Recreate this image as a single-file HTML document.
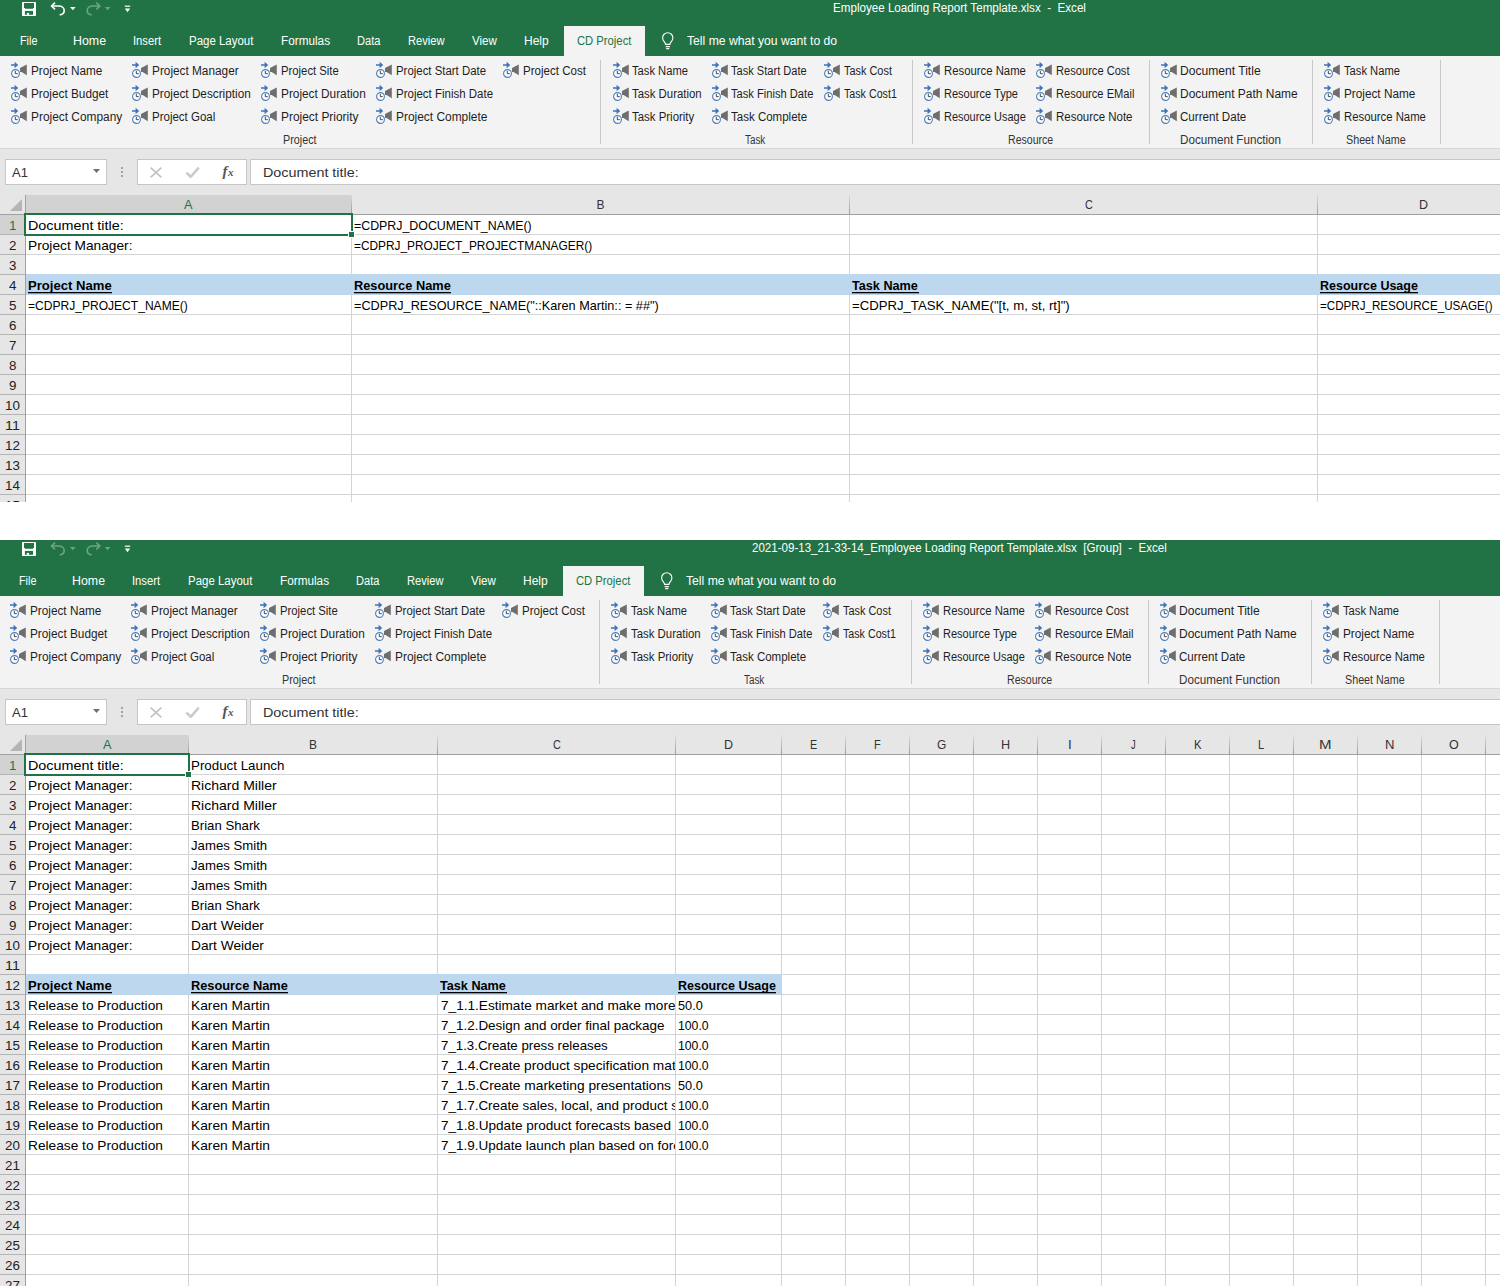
<!DOCTYPE html><html><head><meta charset="utf-8"><style>html,body{margin:0;padding:0}body{width:1500px;height:1286px;overflow:hidden;background:#fff;position:relative;font-family:"Liberation Sans",sans-serif}.a{position:absolute}.t{position:absolute;line-height:0;white-space:pre;transform-origin:0 0}</style></head><body>
<svg width="0" height="0" style="position:absolute"><defs><symbol id="ri" viewBox="0 0 24 20"><path d="M3,6.3 H6.6 V3.8 L10.2,7 L6.6,10.2 V7.7 H3 Z" fill="#3d74ba"/><circle cx="7.5" cy="15.5" r="3.9" fill="#fff" stroke="#4a7ebb" stroke-width="1.1"/><path d="M7.3,12.9 V15.7 H9.8" fill="none" stroke="#444" stroke-width="1"/><path d="M12,10 L18.8,6.6 V17.3 L13.6,13.9 H12 Z" fill="#6e6e6e"/></symbol></defs></svg>
<div class="a" style="left:0;top:0px;width:1500px;height:502px;overflow:hidden;background:#fff">
<div class="a" style="left:0px;top:0px;width:1500px;height:56px;background:#217346;"></div>
<svg class="a" style="left:0;top:0" width="140" height="20" viewBox="0 0 140 20"><rect x="22" y="2" width="14" height="14" rx="0.8" fill="#fff"/><path d="M24,2.9 H34 V7.9 H33 V8.8 H25 V7.9 H24 Z" fill="#217346"/><rect x="24.9" y="10.9" width="8.1" height="3.9" fill="#217346"/><rect x="26.8" y="12.9" width="2.3" height="2" fill="#fff"/><g fill="none" stroke="#fff" stroke-width="1.6"><path d="M55,2.6 L51.6,6 L55,9.4"/><path d="M51.6,6 H58.6 C62,6 64.2,8 64.2,10.5 C64.2,13 62.3,14.6 59.6,14.8"/></g><path d="M70,7 H75.6 L72.8,10.2 Z" fill="#fff"/><g fill="none" stroke="#fff" stroke-width="1.6" opacity="0.35"><path d="M96.4,2.6 L99.8,6 L96.4,9.4"/><path d="M99.8,6 H92.8 C89.4,6 87.2,8 87.2,10.5 C87.2,13 89.1,14.6 91.8,14.8"/></g><path d="M104.8,7 H110.4 L107.6,10.2 Z" fill="#fff" opacity="0.35"/><rect x="124.8" y="5.6" width="5.4" height="1.2" fill="#fff"/><path d="M124.8,8.6 H130.2 L127.5,12.2 Z" fill="#fff"/></svg>
<div class="t" style="left:832.70px;top:8px;font-size:12px;color:#fff;transform:scaleX(0.9682);">Employee Loading Report Template.xlsx  -  Excel</div>
<div class="t" style="left:20.30px;top:41px;font-size:12px;color:#fff;transform:scaleX(0.9000);">File</div>
<div class="t" style="left:73.20px;top:41px;font-size:12px;color:#fff;transform:scaleX(1.0312);">Home</div>
<div class="t" style="left:133.20px;top:41px;font-size:12px;color:#fff;transform:scaleX(0.9355);">Insert</div>
<div class="t" style="left:189.20px;top:41px;font-size:12px;color:#fff;transform:scaleX(0.9559);">Page Layout</div>
<div class="t" style="left:281.20px;top:41px;font-size:12px;color:#fff;transform:scaleX(0.9800);">Formulas</div>
<div class="t" style="left:357.30px;top:41px;font-size:12px;color:#fff;transform:scaleX(0.9231);">Data</div>
<div class="t" style="left:408.30px;top:41px;font-size:12px;color:#fff;transform:scaleX(0.9250);">Review</div>
<div class="t" style="left:472.00px;top:41px;font-size:12px;color:#fff;transform:scaleX(0.9615);">View</div>
<div class="t" style="left:524.00px;top:41px;font-size:12px;color:#fff;transform:scaleX(1.0000);">Help</div>
<div class="t" style="left:687.00px;top:41px;font-size:12px;color:#fff;transform:scaleX(1.0135);">Tell me what you want to do</div>
<div class="a" style="left:564px;top:26px;width:81px;height:30px;background:#f3f3f3;"></div>
<div class="t" style="left:576.70px;top:41px;font-size:12px;color:#217346;transform:scaleX(0.9373);">CD Project</div>
<svg class="a" style="left:662px;top:32px" width="12" height="18" viewBox="0 0 12 18" fill="none" stroke="#fff" stroke-width="1.1"><path d="M3.6,12.4 C3.6,10.4 0.6,9 0.6,5.9 A5.1,5.1 0 0 1 10.9,5.9 C10.9,9 7.9,10.4 7.9,12.4 Z"/><path d="M3.6,14.6 H7.9 M4.2,16.6 H7.3"/></svg>
<div class="a" style="left:0px;top:56px;width:1500px;height:92px;background:#f3f3f3;"></div>
<div class="a" style="left:0px;top:148px;width:1500px;height:1px;background:#d6d6d6;"></div>
<div class="a" style="left:0px;top:149px;width:1500px;height:46px;background:#e6e6e6;"></div>
<svg class="a" style="left:8px;top:58px" width="24" height="20" viewBox="0 0 24 20"><use href="#ri"/></svg>
<div class="t" style="left:30.80px;top:71px;font-size:12px;color:#1e1e1e;transform:scaleX(0.9808);">Project Name</div>
<svg class="a" style="left:8px;top:81px" width="24" height="20" viewBox="0 0 24 20"><use href="#ri"/></svg>
<div class="t" style="left:30.80px;top:94px;font-size:12px;color:#1e1e1e;transform:scaleX(0.9823);">Project Budget</div>
<svg class="a" style="left:8px;top:104px" width="24" height="20" viewBox="0 0 24 20"><use href="#ri"/></svg>
<div class="t" style="left:30.80px;top:117px;font-size:12px;color:#1e1e1e;transform:scaleX(0.9913);">Project Company</div>
<svg class="a" style="left:129px;top:58px" width="24" height="20" viewBox="0 0 24 20"><use href="#ri"/></svg>
<div class="t" style="left:151.60px;top:71px;font-size:12px;color:#1e1e1e;transform:scaleX(0.9841);">Project Manager</div>
<svg class="a" style="left:129px;top:81px" width="24" height="20" viewBox="0 0 24 20"><use href="#ri"/></svg>
<div class="t" style="left:151.60px;top:94px;font-size:12px;color:#1e1e1e;transform:scaleX(0.9802);">Project Description</div>
<svg class="a" style="left:129px;top:104px" width="24" height="20" viewBox="0 0 24 20"><use href="#ri"/></svg>
<div class="t" style="left:151.60px;top:117px;font-size:12px;color:#1e1e1e;transform:scaleX(0.9576);">Project Goal</div>
<svg class="a" style="left:258px;top:58px" width="24" height="20" viewBox="0 0 24 20"><use href="#ri"/></svg>
<div class="t" style="left:280.50px;top:71px;font-size:12px;color:#1e1e1e;transform:scaleX(0.9419);">Project Site</div>
<svg class="a" style="left:258px;top:81px" width="24" height="20" viewBox="0 0 24 20"><use href="#ri"/></svg>
<div class="t" style="left:280.50px;top:94px;font-size:12px;color:#1e1e1e;transform:scaleX(0.9849);">Project Duration</div>
<svg class="a" style="left:258px;top:104px" width="24" height="20" viewBox="0 0 24 20"><use href="#ri"/></svg>
<div class="t" style="left:280.50px;top:117px;font-size:12px;color:#1e1e1e;transform:scaleX(0.9936);">Project Priority</div>
<svg class="a" style="left:373px;top:58px" width="24" height="20" viewBox="0 0 24 20"><use href="#ri"/></svg>
<div class="t" style="left:395.50px;top:71px;font-size:12px;color:#1e1e1e;transform:scaleX(0.9505);">Project Start Date</div>
<svg class="a" style="left:373px;top:81px" width="24" height="20" viewBox="0 0 24 20"><use href="#ri"/></svg>
<div class="t" style="left:395.50px;top:94px;font-size:12px;color:#1e1e1e;transform:scaleX(0.9578);">Project Finish Date</div>
<svg class="a" style="left:373px;top:104px" width="24" height="20" viewBox="0 0 24 20"><use href="#ri"/></svg>
<div class="t" style="left:395.50px;top:117px;font-size:12px;color:#1e1e1e;transform:scaleX(0.9935);">Project Complete</div>
<svg class="a" style="left:500px;top:58px" width="24" height="20" viewBox="0 0 24 20"><use href="#ri"/></svg>
<div class="t" style="left:522.60px;top:71px;font-size:12px;color:#1e1e1e;transform:scaleX(0.9621);">Project Cost</div>
<svg class="a" style="left:610px;top:58px" width="24" height="20" viewBox="0 0 24 20"><use href="#ri"/></svg>
<div class="t" style="left:632.00px;top:71px;font-size:12px;color:#1e1e1e;transform:scaleX(0.9317);">Task Name</div>
<svg class="a" style="left:610px;top:81px" width="24" height="20" viewBox="0 0 24 20"><use href="#ri"/></svg>
<div class="t" style="left:632.00px;top:94px;font-size:12px;color:#1e1e1e;transform:scaleX(0.9493);">Task Duration</div>
<svg class="a" style="left:610px;top:104px" width="24" height="20" viewBox="0 0 24 20"><use href="#ri"/></svg>
<div class="t" style="left:632.00px;top:117px;font-size:12px;color:#1e1e1e;transform:scaleX(0.9523);">Task Priority</div>
<svg class="a" style="left:709px;top:58px" width="24" height="20" viewBox="0 0 24 20"><use href="#ri"/></svg>
<div class="t" style="left:731.30px;top:71px;font-size:12px;color:#1e1e1e;transform:scaleX(0.9232);">Task Start Date</div>
<svg class="a" style="left:709px;top:81px" width="24" height="20" viewBox="0 0 24 20"><use href="#ri"/></svg>
<div class="t" style="left:731.30px;top:94px;font-size:12px;color:#1e1e1e;transform:scaleX(0.9281);">Task Finish Date</div>
<svg class="a" style="left:709px;top:104px" width="24" height="20" viewBox="0 0 24 20"><use href="#ri"/></svg>
<div class="t" style="left:731.30px;top:117px;font-size:12px;color:#1e1e1e;transform:scaleX(0.9600);">Task Complete</div>
<svg class="a" style="left:821px;top:58px" width="24" height="20" viewBox="0 0 24 20"><use href="#ri"/></svg>
<div class="t" style="left:843.60px;top:71px;font-size:12px;color:#1e1e1e;transform:scaleX(0.9094);">Task Cost</div>
<svg class="a" style="left:821px;top:81px" width="24" height="20" viewBox="0 0 24 20"><use href="#ri"/></svg>
<div class="t" style="left:843.60px;top:94px;font-size:12px;color:#1e1e1e;transform:scaleX(0.8900);">Task Cost1</div>
<svg class="a" style="left:921px;top:58px" width="24" height="20" viewBox="0 0 24 20"><use href="#ri"/></svg>
<div class="t" style="left:943.80px;top:71px;font-size:12px;color:#1e1e1e;transform:scaleX(0.9448);">Resource Name</div>
<svg class="a" style="left:921px;top:81px" width="24" height="20" viewBox="0 0 24 20"><use href="#ri"/></svg>
<div class="t" style="left:943.80px;top:94px;font-size:12px;color:#1e1e1e;transform:scaleX(0.9185);">Resource Type</div>
<svg class="a" style="left:921px;top:104px" width="24" height="20" viewBox="0 0 24 20"><use href="#ri"/></svg>
<div class="t" style="left:943.80px;top:117px;font-size:12px;color:#1e1e1e;transform:scaleX(0.9144);">Resource Usage</div>
<svg class="a" style="left:1033px;top:58px" width="24" height="20" viewBox="0 0 24 20"><use href="#ri"/></svg>
<div class="t" style="left:1055.70px;top:71px;font-size:12px;color:#1e1e1e;transform:scaleX(0.9262);">Resource Cost</div>
<svg class="a" style="left:1033px;top:81px" width="24" height="20" viewBox="0 0 24 20"><use href="#ri"/></svg>
<div class="t" style="left:1055.70px;top:94px;font-size:12px;color:#1e1e1e;transform:scaleX(0.9259);">Resource EMail</div>
<svg class="a" style="left:1033px;top:104px" width="24" height="20" viewBox="0 0 24 20"><use href="#ri"/></svg>
<div class="t" style="left:1055.70px;top:117px;font-size:12px;color:#1e1e1e;transform:scaleX(0.9550);">Resource Note</div>
<svg class="a" style="left:1158px;top:58px" width="24" height="20" viewBox="0 0 24 20"><use href="#ri"/></svg>
<div class="t" style="left:1180.40px;top:71px;font-size:12px;color:#1e1e1e;transform:scaleX(1.0075);">Document Title</div>
<svg class="a" style="left:1158px;top:81px" width="24" height="20" viewBox="0 0 24 20"><use href="#ri"/></svg>
<div class="t" style="left:1180.40px;top:94px;font-size:12px;color:#1e1e1e;transform:scaleX(0.9966);">Document Path Name</div>
<svg class="a" style="left:1158px;top:104px" width="24" height="20" viewBox="0 0 24 20"><use href="#ri"/></svg>
<div class="t" style="left:1180.40px;top:117px;font-size:12px;color:#1e1e1e;transform:scaleX(0.9652);">Current Date</div>
<svg class="a" style="left:1321px;top:58px" width="24" height="20" viewBox="0 0 24 20"><use href="#ri"/></svg>
<div class="t" style="left:1343.60px;top:71px;font-size:12px;color:#1e1e1e;transform:scaleX(0.9317);">Task Name</div>
<svg class="a" style="left:1321px;top:81px" width="24" height="20" viewBox="0 0 24 20"><use href="#ri"/></svg>
<div class="t" style="left:1343.60px;top:94px;font-size:12px;color:#1e1e1e;transform:scaleX(0.9808);">Project Name</div>
<svg class="a" style="left:1321px;top:104px" width="24" height="20" viewBox="0 0 24 20"><use href="#ri"/></svg>
<div class="t" style="left:1343.60px;top:117px;font-size:12px;color:#1e1e1e;transform:scaleX(0.9448);">Resource Name</div>
<div class="a" style="left:600px;top:60px;width:1px;height:84px;background:#c8c8c8;"></div>
<div class="a" style="left:912px;top:60px;width:1px;height:84px;background:#c8c8c8;"></div>
<div class="a" style="left:1149px;top:60px;width:1px;height:84px;background:#c8c8c8;"></div>
<div class="a" style="left:1312px;top:60px;width:1px;height:84px;background:#c8c8c8;"></div>
<div class="a" style="left:1440px;top:60px;width:1px;height:84px;background:#c8c8c8;"></div>
<div class="t" style="left:282.70px;top:140px;font-size:12px;color:#333;transform:scaleX(0.8974);">Project</div>
<div class="t" style="left:745.30px;top:140px;font-size:12px;color:#333;transform:scaleX(0.8231);">Task</div>
<div class="t" style="left:1007.50px;top:140px;font-size:12px;color:#333;transform:scaleX(0.8808);">Resource</div>
<div class="t" style="left:1180.40px;top:140px;font-size:12px;color:#333;transform:scaleX(0.9712);">Document Function</div>
<div class="t" style="left:1346.40px;top:140px;font-size:12px;color:#333;transform:scaleX(0.8955);">Sheet Name</div>
<div class="a" style="left:5px;top:159px;width:102px;height:26px;background:#fff;box-sizing:border-box;border:1px solid #c6c6c6"></div>
<div class="t" style="left:12.00px;top:173px;font-size:13px;color:#333;">A1</div>
<svg class="a" style="left:90px;top:165px" width="40" height="16" viewBox="0 0 40 16"><path d="M3,4 H10 L6.5,8 Z" fill="#707070"/><rect x="31" y="2" width="2" height="2" fill="#a0a0a0"/><rect x="31" y="6" width="2" height="2" fill="#a0a0a0"/><rect x="31" y="10" width="2" height="2" fill="#a0a0a0"/></svg>
<div class="a" style="left:137px;top:159px;width:110px;height:26px;background:#fff;box-sizing:border-box;border:1px solid #c6c6c6"></div>
<svg class="a" style="left:137px;top:159px" width="110" height="26" viewBox="0 0 110 26"><path d="M13.6,8.6 L24.4,18.4 M24.4,8.6 L13.6,18.4" stroke="#c2c2c2" stroke-width="1.6" fill="none"/><path d="M49.4,13.6 L53.7,17.8 L61.8,8.6" stroke="#cbcbcb" stroke-width="2.6" fill="none" stroke-linejoin="round"/></svg>
<div class="t" style="left:222.5px;top:171px;font-family:'Liberation Serif',serif;font-style:italic;font-weight:bold;font-size:15px;color:#555">f</div>
<div class="t" style="left:228px;top:172px;font-family:'Liberation Serif',serif;font-style:italic;font-weight:bold;font-size:11px;color:#555">x</div>
<div class="a" style="left:250px;top:159px;width:1260px;height:26px;background:#fff;box-sizing:border-box;border:1px solid #c6c6c6"></div>
<div class="t" style="left:262.50px;top:173px;font-size:13px;color:#333;transform:scaleX(1.1034);">Document title:</div>
<div class="a" style="left:0px;top:195px;width:1500px;height:19px;background:#e6e6e6;"></div>
<div class="a" style="left:26px;top:195px;width:325px;height:19px;background:#d2d2d2;"></div>
<div class="a" style="left:351px;top:195px;width:1px;height:19px;background:linear-gradient(#dcdcdc,#9a9a9a)"></div>
<div class="a" style="left:849px;top:195px;width:1px;height:19px;background:linear-gradient(#dcdcdc,#9a9a9a)"></div>
<div class="a" style="left:1317px;top:195px;width:1px;height:19px;background:linear-gradient(#dcdcdc,#9a9a9a)"></div>
<div class="a" style="left:25px;top:195px;width:1px;height:19px;background:#c8c8c8;"></div>
<div class="a" style="left:0px;top:214px;width:1500px;height:1px;background:#a0a0a0;"></div>
<svg class="a" style="left:0;top:195px" width="25" height="19"><path d="M10,16 L22,4 V16 Z" fill="#b5b5b5"/></svg>
<div class="t" style="left:184.26px;top:205px;font-size:12px;color:#217346;transform:scaleX(1.0610);">A</div>
<div class="t" style="left:596.51px;top:205px;font-size:12px;color:#333;">B</div>
<div class="t" style="left:1084.59px;top:205px;font-size:12px;color:#333;transform:scaleX(0.9020);">C</div>
<div class="t" style="left:1419.49px;top:205px;font-size:12px;color:#333;transform:scaleX(1.0408);">D</div>
<div class="a" style="left:0px;top:215px;width:25px;height:287px;background:#e6e6e6;"></div>
<div class="a" style="left:25px;top:195px;width:1px;height:307px;background:#a0a0a0;"></div>
<div class="a" style="left:0px;top:234px;width:25px;height:1px;background:#b4b4b4;"></div>
<div class="a" style="left:0px;top:215px;width:25px;height:19px;background:#d2d2d2;"></div>
<div class="t" style="left:9.08px;top:226px;font-size:12px;color:#217346;transform:scaleX(1.1144);">1</div>
<div class="a" style="left:0px;top:254px;width:25px;height:1px;background:#b4b4b4;"></div>
<div class="t" style="left:9.08px;top:246px;font-size:12px;color:#222;transform:scaleX(1.1144);">2</div>
<div class="a" style="left:0px;top:274px;width:25px;height:1px;background:#b4b4b4;"></div>
<div class="t" style="left:9.08px;top:266px;font-size:12px;color:#222;transform:scaleX(1.1144);">3</div>
<div class="a" style="left:0px;top:294px;width:25px;height:1px;background:#b4b4b4;"></div>
<div class="t" style="left:9.08px;top:286px;font-size:12px;color:#222;transform:scaleX(1.1144);">4</div>
<div class="a" style="left:0px;top:314px;width:25px;height:1px;background:#b4b4b4;"></div>
<div class="t" style="left:9.08px;top:306px;font-size:12px;color:#222;transform:scaleX(1.1144);">5</div>
<div class="a" style="left:0px;top:334px;width:25px;height:1px;background:#b4b4b4;"></div>
<div class="t" style="left:9.08px;top:326px;font-size:12px;color:#222;transform:scaleX(1.1144);">6</div>
<div class="a" style="left:0px;top:354px;width:25px;height:1px;background:#b4b4b4;"></div>
<div class="t" style="left:9.08px;top:346px;font-size:12px;color:#222;transform:scaleX(1.1144);">7</div>
<div class="a" style="left:0px;top:374px;width:25px;height:1px;background:#b4b4b4;"></div>
<div class="t" style="left:9.08px;top:366px;font-size:12px;color:#222;transform:scaleX(1.1144);">8</div>
<div class="a" style="left:0px;top:394px;width:25px;height:1px;background:#b4b4b4;"></div>
<div class="t" style="left:9.08px;top:386px;font-size:12px;color:#222;transform:scaleX(1.1144);">9</div>
<div class="a" style="left:0px;top:414px;width:25px;height:1px;background:#b4b4b4;"></div>
<div class="t" style="left:5.36px;top:406px;font-size:12px;color:#222;transform:scaleX(1.1144);">10</div>
<div class="a" style="left:0px;top:434px;width:25px;height:1px;background:#b4b4b4;"></div>
<div class="t" style="left:5.36px;top:426px;font-size:12px;color:#222;transform:scaleX(1.1941);">11</div>
<div class="a" style="left:0px;top:454px;width:25px;height:1px;background:#b4b4b4;"></div>
<div class="t" style="left:5.36px;top:446px;font-size:12px;color:#222;transform:scaleX(1.1144);">12</div>
<div class="a" style="left:0px;top:474px;width:25px;height:1px;background:#b4b4b4;"></div>
<div class="t" style="left:5.36px;top:466px;font-size:12px;color:#222;transform:scaleX(1.1144);">13</div>
<div class="a" style="left:0px;top:494px;width:25px;height:1px;background:#b4b4b4;"></div>
<div class="t" style="left:5.36px;top:486px;font-size:12px;color:#222;transform:scaleX(1.1144);">14</div>
<div class="a" style="left:0px;top:514px;width:25px;height:1px;background:#b4b4b4;"></div>
<div class="t" style="left:5.36px;top:506px;font-size:12px;color:#222;transform:scaleX(1.1144);">15</div>
<div class="a" style="left:26px;top:234px;width:1474px;height:1px;background:#d4d4d4;"></div>
<div class="a" style="left:26px;top:254px;width:1474px;height:1px;background:#d4d4d4;"></div>
<div class="a" style="left:26px;top:274px;width:1474px;height:1px;background:#d4d4d4;"></div>
<div class="a" style="left:26px;top:294px;width:1474px;height:1px;background:#d4d4d4;"></div>
<div class="a" style="left:26px;top:314px;width:1474px;height:1px;background:#d4d4d4;"></div>
<div class="a" style="left:26px;top:334px;width:1474px;height:1px;background:#d4d4d4;"></div>
<div class="a" style="left:26px;top:354px;width:1474px;height:1px;background:#d4d4d4;"></div>
<div class="a" style="left:26px;top:374px;width:1474px;height:1px;background:#d4d4d4;"></div>
<div class="a" style="left:26px;top:394px;width:1474px;height:1px;background:#d4d4d4;"></div>
<div class="a" style="left:26px;top:414px;width:1474px;height:1px;background:#d4d4d4;"></div>
<div class="a" style="left:26px;top:434px;width:1474px;height:1px;background:#d4d4d4;"></div>
<div class="a" style="left:26px;top:454px;width:1474px;height:1px;background:#d4d4d4;"></div>
<div class="a" style="left:26px;top:474px;width:1474px;height:1px;background:#d4d4d4;"></div>
<div class="a" style="left:26px;top:494px;width:1474px;height:1px;background:#d4d4d4;"></div>
<div class="a" style="left:26px;top:514px;width:1474px;height:1px;background:#d4d4d4;"></div>
<div class="a" style="left:351px;top:215px;width:1px;height:287px;background:#d4d4d4;"></div>
<div class="a" style="left:849px;top:215px;width:1px;height:287px;background:#d4d4d4;"></div>
<div class="a" style="left:1317px;top:215px;width:1px;height:287px;background:#d4d4d4;"></div>
<div class="a" style="left:26px;top:274px;width:1474px;height:21px;background:#bdd7ee;"></div>
<div class="t" style="left:28.40px;top:226px;font-size:13px;color:#000;transform:scaleX(1.1034);">Document title:</div>
<div class="t" style="left:28.40px;top:246px;font-size:13px;color:#000;transform:scaleX(1.0556);">Project Manager:</div>
<div class="t" style="left:354.40px;top:226px;font-size:13px;color:#000;transform:scaleX(0.9519);">=CDPRJ_DOCUMENT_NAME()</div>
<div class="t" style="left:354.40px;top:246px;font-size:13px;color:#000;transform:scaleX(0.9119);">=CDPRJ_PROJECT_PROJECTMANAGER()</div>
<div class="t" style="left:28.40px;top:286px;font-size:13px;color:#000;font-weight:bold;transform:scaleX(1.0072);">Project Name</div>
<div class="a" style="left:28.4px;top:292px;width:83.6px;height:1px;background:#000"></div>
<div class="a" style="left:28.4px;top:293px;width:83.6px;height:1px;background:#000;opacity:.3"></div>
<div class="t" style="left:354.40px;top:286px;font-size:13px;color:#000;font-weight:bold;transform:scaleX(0.9847);">Resource Name</div>
<div class="a" style="left:354.4px;top:292px;width:96.5px;height:1px;background:#000"></div>
<div class="a" style="left:354.4px;top:293px;width:96.5px;height:1px;background:#000;opacity:.3"></div>
<div class="t" style="left:852.40px;top:286px;font-size:13px;color:#000;font-weight:bold;transform:scaleX(0.9735);">Task Name</div>
<div class="a" style="left:852.4px;top:292px;width:66.2px;height:1px;background:#000"></div>
<div class="a" style="left:852.4px;top:293px;width:66.2px;height:1px;background:#000;opacity:.3"></div>
<div class="t" style="left:1320.40px;top:286px;font-size:13px;color:#000;font-weight:bold;transform:scaleX(0.9608);">Resource Usage</div>
<div class="a" style="left:1320.4px;top:292px;width:98.0px;height:1px;background:#000"></div>
<div class="a" style="left:1320.4px;top:293px;width:98.0px;height:1px;background:#000;opacity:.3"></div>
<div class="t" style="left:28.40px;top:306px;font-size:13px;color:#000;transform:scaleX(0.9273);">=CDPRJ_PROJECT_NAME()</div>
<div class="t" style="left:354.40px;top:306px;font-size:13px;color:#000;transform:scaleX(0.9744);">=CDPRJ_RESOURCE_NAME(&quot;::Karen Martin:: = ##&quot;)</div>
<div class="t" style="left:852.40px;top:306px;font-size:13px;color:#000;transform:scaleX(1.0116);">=CDPRJ_TASK_NAME(&quot;[t, m, st, rt]&quot;)</div>
<div class="t" style="left:1320.40px;top:306px;font-size:13px;color:#000;transform:scaleX(0.8927);">=CDPRJ_RESOURCE_USAGE()</div>
<div class="a" style="left:24px;top:213px;width:329px;height:23px;box-sizing:border-box;border:2px solid #217346"></div>
<div class="a" style="left:348px;top:231px;width:7px;height:7px;background:#fff;"></div>
<div class="a" style="left:349px;top:232px;width:5px;height:5px;background:#217346;"></div>
</div>
<div class="a" style="left:0;top:540px;width:1500px;height:746px;overflow:hidden;background:#fff">
<div class="a" style="left:0px;top:0px;width:1500px;height:56px;background:#217346;"></div>
<svg class="a" style="left:0;top:0" width="140" height="20" viewBox="0 0 140 20"><rect x="22" y="2" width="14" height="14" rx="0.8" fill="#fff"/><path d="M24,2.9 H34 V7.9 H33 V8.8 H25 V7.9 H24 Z" fill="#217346"/><rect x="24.9" y="10.9" width="8.1" height="3.9" fill="#217346"/><rect x="26.8" y="12.9" width="2.3" height="2" fill="#fff"/><g fill="none" stroke="#fff" stroke-width="1.6" opacity="0.35"><path d="M55,2.6 L51.6,6 L55,9.4"/><path d="M51.6,6 H58.6 C62,6 64.2,8 64.2,10.5 C64.2,13 62.3,14.6 59.6,14.8"/></g><path d="M70,7 H75.6 L72.8,10.2 Z" fill="#fff" opacity="0.35"/><g fill="none" stroke="#fff" stroke-width="1.6" opacity="0.35"><path d="M96.4,2.6 L99.8,6 L96.4,9.4"/><path d="M99.8,6 H92.8 C89.4,6 87.2,8 87.2,10.5 C87.2,13 89.1,14.6 91.8,14.8"/></g><path d="M104.8,7 H110.4 L107.6,10.2 Z" fill="#fff" opacity="0.35"/><rect x="124.8" y="5.6" width="5.4" height="1.2" fill="#fff"/><path d="M124.8,8.6 H130.2 L127.5,12.2 Z" fill="#fff"/></svg>
<div class="t" style="left:751.70px;top:8px;font-size:12px;color:#fff;transform:scaleX(0.9629);">2021-09-13_21-33-14_Employee Loading Report Template.xlsx  [Group]  -  Excel</div>
<div class="t" style="left:19.30px;top:41px;font-size:12px;color:#fff;transform:scaleX(0.9000);">File</div>
<div class="t" style="left:72.20px;top:41px;font-size:12px;color:#fff;transform:scaleX(1.0312);">Home</div>
<div class="t" style="left:132.20px;top:41px;font-size:12px;color:#fff;transform:scaleX(0.9355);">Insert</div>
<div class="t" style="left:188.20px;top:41px;font-size:12px;color:#fff;transform:scaleX(0.9559);">Page Layout</div>
<div class="t" style="left:280.20px;top:41px;font-size:12px;color:#fff;transform:scaleX(0.9800);">Formulas</div>
<div class="t" style="left:356.30px;top:41px;font-size:12px;color:#fff;transform:scaleX(0.9231);">Data</div>
<div class="t" style="left:407.30px;top:41px;font-size:12px;color:#fff;transform:scaleX(0.9250);">Review</div>
<div class="t" style="left:471.00px;top:41px;font-size:12px;color:#fff;transform:scaleX(0.9615);">View</div>
<div class="t" style="left:523.00px;top:41px;font-size:12px;color:#fff;transform:scaleX(1.0000);">Help</div>
<div class="t" style="left:686.00px;top:41px;font-size:12px;color:#fff;transform:scaleX(1.0135);">Tell me what you want to do</div>
<div class="a" style="left:563px;top:26px;width:81px;height:30px;background:#f3f3f3;"></div>
<div class="t" style="left:575.70px;top:41px;font-size:12px;color:#217346;transform:scaleX(0.9373);">CD Project</div>
<svg class="a" style="left:661px;top:32px" width="12" height="18" viewBox="0 0 12 18" fill="none" stroke="#fff" stroke-width="1.1"><path d="M3.6,12.4 C3.6,10.4 0.6,9 0.6,5.9 A5.1,5.1 0 0 1 10.9,5.9 C10.9,9 7.9,10.4 7.9,12.4 Z"/><path d="M3.6,14.6 H7.9 M4.2,16.6 H7.3"/></svg>
<div class="a" style="left:0px;top:56px;width:1500px;height:92px;background:#f3f3f3;"></div>
<div class="a" style="left:0px;top:148px;width:1500px;height:1px;background:#d6d6d6;"></div>
<div class="a" style="left:0px;top:149px;width:1500px;height:46px;background:#e6e6e6;"></div>
<svg class="a" style="left:7px;top:58px" width="24" height="20" viewBox="0 0 24 20"><use href="#ri"/></svg>
<div class="t" style="left:29.80px;top:71px;font-size:12px;color:#1e1e1e;transform:scaleX(0.9808);">Project Name</div>
<svg class="a" style="left:7px;top:81px" width="24" height="20" viewBox="0 0 24 20"><use href="#ri"/></svg>
<div class="t" style="left:29.80px;top:94px;font-size:12px;color:#1e1e1e;transform:scaleX(0.9823);">Project Budget</div>
<svg class="a" style="left:7px;top:104px" width="24" height="20" viewBox="0 0 24 20"><use href="#ri"/></svg>
<div class="t" style="left:29.80px;top:117px;font-size:12px;color:#1e1e1e;transform:scaleX(0.9913);">Project Company</div>
<svg class="a" style="left:128px;top:58px" width="24" height="20" viewBox="0 0 24 20"><use href="#ri"/></svg>
<div class="t" style="left:150.60px;top:71px;font-size:12px;color:#1e1e1e;transform:scaleX(0.9841);">Project Manager</div>
<svg class="a" style="left:128px;top:81px" width="24" height="20" viewBox="0 0 24 20"><use href="#ri"/></svg>
<div class="t" style="left:150.60px;top:94px;font-size:12px;color:#1e1e1e;transform:scaleX(0.9802);">Project Description</div>
<svg class="a" style="left:128px;top:104px" width="24" height="20" viewBox="0 0 24 20"><use href="#ri"/></svg>
<div class="t" style="left:150.60px;top:117px;font-size:12px;color:#1e1e1e;transform:scaleX(0.9576);">Project Goal</div>
<svg class="a" style="left:257px;top:58px" width="24" height="20" viewBox="0 0 24 20"><use href="#ri"/></svg>
<div class="t" style="left:279.50px;top:71px;font-size:12px;color:#1e1e1e;transform:scaleX(0.9419);">Project Site</div>
<svg class="a" style="left:257px;top:81px" width="24" height="20" viewBox="0 0 24 20"><use href="#ri"/></svg>
<div class="t" style="left:279.50px;top:94px;font-size:12px;color:#1e1e1e;transform:scaleX(0.9849);">Project Duration</div>
<svg class="a" style="left:257px;top:104px" width="24" height="20" viewBox="0 0 24 20"><use href="#ri"/></svg>
<div class="t" style="left:279.50px;top:117px;font-size:12px;color:#1e1e1e;transform:scaleX(0.9936);">Project Priority</div>
<svg class="a" style="left:372px;top:58px" width="24" height="20" viewBox="0 0 24 20"><use href="#ri"/></svg>
<div class="t" style="left:394.50px;top:71px;font-size:12px;color:#1e1e1e;transform:scaleX(0.9505);">Project Start Date</div>
<svg class="a" style="left:372px;top:81px" width="24" height="20" viewBox="0 0 24 20"><use href="#ri"/></svg>
<div class="t" style="left:394.50px;top:94px;font-size:12px;color:#1e1e1e;transform:scaleX(0.9578);">Project Finish Date</div>
<svg class="a" style="left:372px;top:104px" width="24" height="20" viewBox="0 0 24 20"><use href="#ri"/></svg>
<div class="t" style="left:394.50px;top:117px;font-size:12px;color:#1e1e1e;transform:scaleX(0.9935);">Project Complete</div>
<svg class="a" style="left:499px;top:58px" width="24" height="20" viewBox="0 0 24 20"><use href="#ri"/></svg>
<div class="t" style="left:521.60px;top:71px;font-size:12px;color:#1e1e1e;transform:scaleX(0.9621);">Project Cost</div>
<svg class="a" style="left:608px;top:58px" width="24" height="20" viewBox="0 0 24 20"><use href="#ri"/></svg>
<div class="t" style="left:631.00px;top:71px;font-size:12px;color:#1e1e1e;transform:scaleX(0.9317);">Task Name</div>
<svg class="a" style="left:608px;top:81px" width="24" height="20" viewBox="0 0 24 20"><use href="#ri"/></svg>
<div class="t" style="left:631.00px;top:94px;font-size:12px;color:#1e1e1e;transform:scaleX(0.9493);">Task Duration</div>
<svg class="a" style="left:608px;top:104px" width="24" height="20" viewBox="0 0 24 20"><use href="#ri"/></svg>
<div class="t" style="left:631.00px;top:117px;font-size:12px;color:#1e1e1e;transform:scaleX(0.9523);">Task Priority</div>
<svg class="a" style="left:708px;top:58px" width="24" height="20" viewBox="0 0 24 20"><use href="#ri"/></svg>
<div class="t" style="left:730.30px;top:71px;font-size:12px;color:#1e1e1e;transform:scaleX(0.9232);">Task Start Date</div>
<svg class="a" style="left:708px;top:81px" width="24" height="20" viewBox="0 0 24 20"><use href="#ri"/></svg>
<div class="t" style="left:730.30px;top:94px;font-size:12px;color:#1e1e1e;transform:scaleX(0.9281);">Task Finish Date</div>
<svg class="a" style="left:708px;top:104px" width="24" height="20" viewBox="0 0 24 20"><use href="#ri"/></svg>
<div class="t" style="left:730.30px;top:117px;font-size:12px;color:#1e1e1e;transform:scaleX(0.9600);">Task Complete</div>
<svg class="a" style="left:820px;top:58px" width="24" height="20" viewBox="0 0 24 20"><use href="#ri"/></svg>
<div class="t" style="left:842.60px;top:71px;font-size:12px;color:#1e1e1e;transform:scaleX(0.9094);">Task Cost</div>
<svg class="a" style="left:820px;top:81px" width="24" height="20" viewBox="0 0 24 20"><use href="#ri"/></svg>
<div class="t" style="left:842.60px;top:94px;font-size:12px;color:#1e1e1e;transform:scaleX(0.8900);">Task Cost1</div>
<svg class="a" style="left:920px;top:58px" width="24" height="20" viewBox="0 0 24 20"><use href="#ri"/></svg>
<div class="t" style="left:942.80px;top:71px;font-size:12px;color:#1e1e1e;transform:scaleX(0.9448);">Resource Name</div>
<svg class="a" style="left:920px;top:81px" width="24" height="20" viewBox="0 0 24 20"><use href="#ri"/></svg>
<div class="t" style="left:942.80px;top:94px;font-size:12px;color:#1e1e1e;transform:scaleX(0.9185);">Resource Type</div>
<svg class="a" style="left:920px;top:104px" width="24" height="20" viewBox="0 0 24 20"><use href="#ri"/></svg>
<div class="t" style="left:942.80px;top:117px;font-size:12px;color:#1e1e1e;transform:scaleX(0.9144);">Resource Usage</div>
<svg class="a" style="left:1032px;top:58px" width="24" height="20" viewBox="0 0 24 20"><use href="#ri"/></svg>
<div class="t" style="left:1054.70px;top:71px;font-size:12px;color:#1e1e1e;transform:scaleX(0.9262);">Resource Cost</div>
<svg class="a" style="left:1032px;top:81px" width="24" height="20" viewBox="0 0 24 20"><use href="#ri"/></svg>
<div class="t" style="left:1054.70px;top:94px;font-size:12px;color:#1e1e1e;transform:scaleX(0.9259);">Resource EMail</div>
<svg class="a" style="left:1032px;top:104px" width="24" height="20" viewBox="0 0 24 20"><use href="#ri"/></svg>
<div class="t" style="left:1054.70px;top:117px;font-size:12px;color:#1e1e1e;transform:scaleX(0.9550);">Resource Note</div>
<svg class="a" style="left:1157px;top:58px" width="24" height="20" viewBox="0 0 24 20"><use href="#ri"/></svg>
<div class="t" style="left:1179.40px;top:71px;font-size:12px;color:#1e1e1e;transform:scaleX(1.0075);">Document Title</div>
<svg class="a" style="left:1157px;top:81px" width="24" height="20" viewBox="0 0 24 20"><use href="#ri"/></svg>
<div class="t" style="left:1179.40px;top:94px;font-size:12px;color:#1e1e1e;transform:scaleX(0.9966);">Document Path Name</div>
<svg class="a" style="left:1157px;top:104px" width="24" height="20" viewBox="0 0 24 20"><use href="#ri"/></svg>
<div class="t" style="left:1179.40px;top:117px;font-size:12px;color:#1e1e1e;transform:scaleX(0.9652);">Current Date</div>
<svg class="a" style="left:1320px;top:58px" width="24" height="20" viewBox="0 0 24 20"><use href="#ri"/></svg>
<div class="t" style="left:1342.60px;top:71px;font-size:12px;color:#1e1e1e;transform:scaleX(0.9317);">Task Name</div>
<svg class="a" style="left:1320px;top:81px" width="24" height="20" viewBox="0 0 24 20"><use href="#ri"/></svg>
<div class="t" style="left:1342.60px;top:94px;font-size:12px;color:#1e1e1e;transform:scaleX(0.9808);">Project Name</div>
<svg class="a" style="left:1320px;top:104px" width="24" height="20" viewBox="0 0 24 20"><use href="#ri"/></svg>
<div class="t" style="left:1342.60px;top:117px;font-size:12px;color:#1e1e1e;transform:scaleX(0.9448);">Resource Name</div>
<div class="a" style="left:599px;top:60px;width:1px;height:84px;background:#c8c8c8;"></div>
<div class="a" style="left:911px;top:60px;width:1px;height:84px;background:#c8c8c8;"></div>
<div class="a" style="left:1148px;top:60px;width:1px;height:84px;background:#c8c8c8;"></div>
<div class="a" style="left:1311px;top:60px;width:1px;height:84px;background:#c8c8c8;"></div>
<div class="a" style="left:1439px;top:60px;width:1px;height:84px;background:#c8c8c8;"></div>
<div class="t" style="left:281.70px;top:140px;font-size:12px;color:#333;transform:scaleX(0.8974);">Project</div>
<div class="t" style="left:744.30px;top:140px;font-size:12px;color:#333;transform:scaleX(0.8231);">Task</div>
<div class="t" style="left:1006.50px;top:140px;font-size:12px;color:#333;transform:scaleX(0.8808);">Resource</div>
<div class="t" style="left:1179.40px;top:140px;font-size:12px;color:#333;transform:scaleX(0.9712);">Document Function</div>
<div class="t" style="left:1345.40px;top:140px;font-size:12px;color:#333;transform:scaleX(0.8955);">Sheet Name</div>
<div class="a" style="left:5px;top:159px;width:102px;height:26px;background:#fff;box-sizing:border-box;border:1px solid #c6c6c6"></div>
<div class="t" style="left:12.00px;top:173px;font-size:13px;color:#333;">A1</div>
<svg class="a" style="left:90px;top:165px" width="40" height="16" viewBox="0 0 40 16"><path d="M3,4 H10 L6.5,8 Z" fill="#707070"/><rect x="31" y="2" width="2" height="2" fill="#a0a0a0"/><rect x="31" y="6" width="2" height="2" fill="#a0a0a0"/><rect x="31" y="10" width="2" height="2" fill="#a0a0a0"/></svg>
<div class="a" style="left:137px;top:159px;width:110px;height:26px;background:#fff;box-sizing:border-box;border:1px solid #c6c6c6"></div>
<svg class="a" style="left:137px;top:159px" width="110" height="26" viewBox="0 0 110 26"><path d="M13.6,8.6 L24.4,18.4 M24.4,8.6 L13.6,18.4" stroke="#c2c2c2" stroke-width="1.6" fill="none"/><path d="M49.4,13.6 L53.7,17.8 L61.8,8.6" stroke="#cbcbcb" stroke-width="2.6" fill="none" stroke-linejoin="round"/></svg>
<div class="t" style="left:222.5px;top:171px;font-family:'Liberation Serif',serif;font-style:italic;font-weight:bold;font-size:15px;color:#555">f</div>
<div class="t" style="left:228px;top:172px;font-family:'Liberation Serif',serif;font-style:italic;font-weight:bold;font-size:11px;color:#555">x</div>
<div class="a" style="left:250px;top:159px;width:1260px;height:26px;background:#fff;box-sizing:border-box;border:1px solid #c6c6c6"></div>
<div class="t" style="left:262.50px;top:173px;font-size:13px;color:#333;transform:scaleX(1.1034);">Document title:</div>
<div class="a" style="left:0px;top:195px;width:1500px;height:19px;background:#e6e6e6;"></div>
<div class="a" style="left:26px;top:195px;width:162px;height:19px;background:#d2d2d2;"></div>
<div class="a" style="left:188px;top:195px;width:1px;height:19px;background:linear-gradient(#dcdcdc,#9a9a9a)"></div>
<div class="a" style="left:437px;top:195px;width:1px;height:19px;background:linear-gradient(#dcdcdc,#9a9a9a)"></div>
<div class="a" style="left:675px;top:195px;width:1px;height:19px;background:linear-gradient(#dcdcdc,#9a9a9a)"></div>
<div class="a" style="left:781px;top:195px;width:1px;height:19px;background:linear-gradient(#dcdcdc,#9a9a9a)"></div>
<div class="a" style="left:845px;top:195px;width:1px;height:19px;background:linear-gradient(#dcdcdc,#9a9a9a)"></div>
<div class="a" style="left:909px;top:195px;width:1px;height:19px;background:linear-gradient(#dcdcdc,#9a9a9a)"></div>
<div class="a" style="left:973px;top:195px;width:1px;height:19px;background:linear-gradient(#dcdcdc,#9a9a9a)"></div>
<div class="a" style="left:1037px;top:195px;width:1px;height:19px;background:linear-gradient(#dcdcdc,#9a9a9a)"></div>
<div class="a" style="left:1101px;top:195px;width:1px;height:19px;background:linear-gradient(#dcdcdc,#9a9a9a)"></div>
<div class="a" style="left:1165px;top:195px;width:1px;height:19px;background:linear-gradient(#dcdcdc,#9a9a9a)"></div>
<div class="a" style="left:1229px;top:195px;width:1px;height:19px;background:linear-gradient(#dcdcdc,#9a9a9a)"></div>
<div class="a" style="left:1293px;top:195px;width:1px;height:19px;background:linear-gradient(#dcdcdc,#9a9a9a)"></div>
<div class="a" style="left:1357px;top:195px;width:1px;height:19px;background:linear-gradient(#dcdcdc,#9a9a9a)"></div>
<div class="a" style="left:1421px;top:195px;width:1px;height:19px;background:linear-gradient(#dcdcdc,#9a9a9a)"></div>
<div class="a" style="left:1485px;top:195px;width:1px;height:19px;background:linear-gradient(#dcdcdc,#9a9a9a)"></div>
<div class="a" style="left:25px;top:195px;width:1px;height:19px;background:#c8c8c8;"></div>
<div class="a" style="left:0px;top:214px;width:1500px;height:1px;background:#a0a0a0;"></div>
<svg class="a" style="left:0;top:195px" width="25" height="19"><path d="M10,16 L22,4 V16 Z" fill="#b5b5b5"/></svg>
<div class="t" style="left:102.76px;top:205px;font-size:12px;color:#217346;transform:scaleX(1.0610);">A</div>
<div class="t" style="left:309.01px;top:205px;font-size:12px;color:#333;">B</div>
<div class="t" style="left:552.59px;top:205px;font-size:12px;color:#333;transform:scaleX(0.9020);">C</div>
<div class="t" style="left:723.99px;top:205px;font-size:12px;color:#333;transform:scaleX(1.0408);">D</div>
<div class="t" style="left:809.92px;top:205px;font-size:12px;color:#333;transform:scaleX(0.8954);">E</div>
<div class="t" style="left:874.13px;top:205px;font-size:12px;color:#333;transform:scaleX(0.9198);">F</div>
<div class="t" style="left:936.87px;top:205px;font-size:12px;color:#333;transform:scaleX(0.9921);">G</div>
<div class="t" style="left:1000.93px;top:205px;font-size:12px;color:#333;transform:scaleX(1.0540);">H</div>
<div class="t" style="left:1067.65px;top:205px;font-size:12px;color:#333;transform:scaleX(1.1106);">I</div>
<div class="t" style="left:1131.16px;top:205px;font-size:12px;color:#333;transform:scaleX(0.7796);">J</div>
<div class="t" style="left:1193.69px;top:205px;font-size:12px;color:#333;transform:scaleX(0.9527);">K</div>
<div class="t" style="left:1258.42px;top:205px;font-size:12px;color:#333;transform:scaleX(0.9244);">L</div>
<div class="t" style="left:1319.23px;top:205px;font-size:12px;color:#333;transform:scaleX(1.2543);">M</div>
<div class="t" style="left:1384.77px;top:205px;font-size:12px;color:#333;transform:scaleX(1.0920);">N</div>
<div class="t" style="left:1448.64px;top:205px;font-size:12px;color:#333;transform:scaleX(1.0413);">O</div>
<div class="a" style="left:0px;top:215px;width:25px;height:531px;background:#e6e6e6;"></div>
<div class="a" style="left:25px;top:195px;width:1px;height:551px;background:#a0a0a0;"></div>
<div class="a" style="left:0px;top:234px;width:25px;height:1px;background:#b4b4b4;"></div>
<div class="a" style="left:0px;top:215px;width:25px;height:19px;background:#d2d2d2;"></div>
<div class="t" style="left:9.08px;top:226px;font-size:12px;color:#217346;transform:scaleX(1.1144);">1</div>
<div class="a" style="left:0px;top:254px;width:25px;height:1px;background:#b4b4b4;"></div>
<div class="t" style="left:9.08px;top:246px;font-size:12px;color:#222;transform:scaleX(1.1144);">2</div>
<div class="a" style="left:0px;top:274px;width:25px;height:1px;background:#b4b4b4;"></div>
<div class="t" style="left:9.08px;top:266px;font-size:12px;color:#222;transform:scaleX(1.1144);">3</div>
<div class="a" style="left:0px;top:294px;width:25px;height:1px;background:#b4b4b4;"></div>
<div class="t" style="left:9.08px;top:286px;font-size:12px;color:#222;transform:scaleX(1.1144);">4</div>
<div class="a" style="left:0px;top:314px;width:25px;height:1px;background:#b4b4b4;"></div>
<div class="t" style="left:9.08px;top:306px;font-size:12px;color:#222;transform:scaleX(1.1144);">5</div>
<div class="a" style="left:0px;top:334px;width:25px;height:1px;background:#b4b4b4;"></div>
<div class="t" style="left:9.08px;top:326px;font-size:12px;color:#222;transform:scaleX(1.1144);">6</div>
<div class="a" style="left:0px;top:354px;width:25px;height:1px;background:#b4b4b4;"></div>
<div class="t" style="left:9.08px;top:346px;font-size:12px;color:#222;transform:scaleX(1.1144);">7</div>
<div class="a" style="left:0px;top:374px;width:25px;height:1px;background:#b4b4b4;"></div>
<div class="t" style="left:9.08px;top:366px;font-size:12px;color:#222;transform:scaleX(1.1144);">8</div>
<div class="a" style="left:0px;top:394px;width:25px;height:1px;background:#b4b4b4;"></div>
<div class="t" style="left:9.08px;top:386px;font-size:12px;color:#222;transform:scaleX(1.1144);">9</div>
<div class="a" style="left:0px;top:414px;width:25px;height:1px;background:#b4b4b4;"></div>
<div class="t" style="left:5.36px;top:406px;font-size:12px;color:#222;transform:scaleX(1.1144);">10</div>
<div class="a" style="left:0px;top:434px;width:25px;height:1px;background:#b4b4b4;"></div>
<div class="t" style="left:5.36px;top:426px;font-size:12px;color:#222;transform:scaleX(1.1941);">11</div>
<div class="a" style="left:0px;top:454px;width:25px;height:1px;background:#b4b4b4;"></div>
<div class="t" style="left:5.36px;top:446px;font-size:12px;color:#222;transform:scaleX(1.1144);">12</div>
<div class="a" style="left:0px;top:474px;width:25px;height:1px;background:#b4b4b4;"></div>
<div class="t" style="left:5.36px;top:466px;font-size:12px;color:#222;transform:scaleX(1.1144);">13</div>
<div class="a" style="left:0px;top:494px;width:25px;height:1px;background:#b4b4b4;"></div>
<div class="t" style="left:5.36px;top:486px;font-size:12px;color:#222;transform:scaleX(1.1144);">14</div>
<div class="a" style="left:0px;top:514px;width:25px;height:1px;background:#b4b4b4;"></div>
<div class="t" style="left:5.36px;top:506px;font-size:12px;color:#222;transform:scaleX(1.1144);">15</div>
<div class="a" style="left:0px;top:534px;width:25px;height:1px;background:#b4b4b4;"></div>
<div class="t" style="left:5.36px;top:526px;font-size:12px;color:#222;transform:scaleX(1.1144);">16</div>
<div class="a" style="left:0px;top:554px;width:25px;height:1px;background:#b4b4b4;"></div>
<div class="t" style="left:5.36px;top:546px;font-size:12px;color:#222;transform:scaleX(1.1144);">17</div>
<div class="a" style="left:0px;top:574px;width:25px;height:1px;background:#b4b4b4;"></div>
<div class="t" style="left:5.36px;top:566px;font-size:12px;color:#222;transform:scaleX(1.1144);">18</div>
<div class="a" style="left:0px;top:594px;width:25px;height:1px;background:#b4b4b4;"></div>
<div class="t" style="left:5.36px;top:586px;font-size:12px;color:#222;transform:scaleX(1.1144);">19</div>
<div class="a" style="left:0px;top:614px;width:25px;height:1px;background:#b4b4b4;"></div>
<div class="t" style="left:5.36px;top:606px;font-size:12px;color:#222;transform:scaleX(1.1144);">20</div>
<div class="a" style="left:0px;top:634px;width:25px;height:1px;background:#b4b4b4;"></div>
<div class="t" style="left:5.36px;top:626px;font-size:12px;color:#222;transform:scaleX(1.1144);">21</div>
<div class="a" style="left:0px;top:654px;width:25px;height:1px;background:#b4b4b4;"></div>
<div class="t" style="left:5.36px;top:646px;font-size:12px;color:#222;transform:scaleX(1.1144);">22</div>
<div class="a" style="left:0px;top:674px;width:25px;height:1px;background:#b4b4b4;"></div>
<div class="t" style="left:5.36px;top:666px;font-size:12px;color:#222;transform:scaleX(1.1144);">23</div>
<div class="a" style="left:0px;top:694px;width:25px;height:1px;background:#b4b4b4;"></div>
<div class="t" style="left:5.36px;top:686px;font-size:12px;color:#222;transform:scaleX(1.1144);">24</div>
<div class="a" style="left:0px;top:714px;width:25px;height:1px;background:#b4b4b4;"></div>
<div class="t" style="left:5.36px;top:706px;font-size:12px;color:#222;transform:scaleX(1.1144);">25</div>
<div class="a" style="left:0px;top:734px;width:25px;height:1px;background:#b4b4b4;"></div>
<div class="t" style="left:5.36px;top:726px;font-size:12px;color:#222;transform:scaleX(1.1144);">26</div>
<div class="a" style="left:0px;top:754px;width:25px;height:1px;background:#b4b4b4;"></div>
<div class="t" style="left:5.36px;top:746px;font-size:12px;color:#222;transform:scaleX(1.1144);">27</div>
<div class="a" style="left:26px;top:234px;width:1474px;height:1px;background:#d4d4d4;"></div>
<div class="a" style="left:26px;top:254px;width:1474px;height:1px;background:#d4d4d4;"></div>
<div class="a" style="left:26px;top:274px;width:1474px;height:1px;background:#d4d4d4;"></div>
<div class="a" style="left:26px;top:294px;width:1474px;height:1px;background:#d4d4d4;"></div>
<div class="a" style="left:26px;top:314px;width:1474px;height:1px;background:#d4d4d4;"></div>
<div class="a" style="left:26px;top:334px;width:1474px;height:1px;background:#d4d4d4;"></div>
<div class="a" style="left:26px;top:354px;width:1474px;height:1px;background:#d4d4d4;"></div>
<div class="a" style="left:26px;top:374px;width:1474px;height:1px;background:#d4d4d4;"></div>
<div class="a" style="left:26px;top:394px;width:1474px;height:1px;background:#d4d4d4;"></div>
<div class="a" style="left:26px;top:414px;width:1474px;height:1px;background:#d4d4d4;"></div>
<div class="a" style="left:26px;top:434px;width:1474px;height:1px;background:#d4d4d4;"></div>
<div class="a" style="left:26px;top:454px;width:1474px;height:1px;background:#d4d4d4;"></div>
<div class="a" style="left:26px;top:474px;width:1474px;height:1px;background:#d4d4d4;"></div>
<div class="a" style="left:26px;top:494px;width:1474px;height:1px;background:#d4d4d4;"></div>
<div class="a" style="left:26px;top:514px;width:1474px;height:1px;background:#d4d4d4;"></div>
<div class="a" style="left:26px;top:534px;width:1474px;height:1px;background:#d4d4d4;"></div>
<div class="a" style="left:26px;top:554px;width:1474px;height:1px;background:#d4d4d4;"></div>
<div class="a" style="left:26px;top:574px;width:1474px;height:1px;background:#d4d4d4;"></div>
<div class="a" style="left:26px;top:594px;width:1474px;height:1px;background:#d4d4d4;"></div>
<div class="a" style="left:26px;top:614px;width:1474px;height:1px;background:#d4d4d4;"></div>
<div class="a" style="left:26px;top:634px;width:1474px;height:1px;background:#d4d4d4;"></div>
<div class="a" style="left:26px;top:654px;width:1474px;height:1px;background:#d4d4d4;"></div>
<div class="a" style="left:26px;top:674px;width:1474px;height:1px;background:#d4d4d4;"></div>
<div class="a" style="left:26px;top:694px;width:1474px;height:1px;background:#d4d4d4;"></div>
<div class="a" style="left:26px;top:714px;width:1474px;height:1px;background:#d4d4d4;"></div>
<div class="a" style="left:26px;top:734px;width:1474px;height:1px;background:#d4d4d4;"></div>
<div class="a" style="left:26px;top:754px;width:1474px;height:1px;background:#d4d4d4;"></div>
<div class="a" style="left:188px;top:215px;width:1px;height:531px;background:#d4d4d4;"></div>
<div class="a" style="left:437px;top:215px;width:1px;height:531px;background:#d4d4d4;"></div>
<div class="a" style="left:675px;top:215px;width:1px;height:531px;background:#d4d4d4;"></div>
<div class="a" style="left:781px;top:215px;width:1px;height:531px;background:#d4d4d4;"></div>
<div class="a" style="left:845px;top:215px;width:1px;height:531px;background:#d4d4d4;"></div>
<div class="a" style="left:909px;top:215px;width:1px;height:531px;background:#d4d4d4;"></div>
<div class="a" style="left:973px;top:215px;width:1px;height:531px;background:#d4d4d4;"></div>
<div class="a" style="left:1037px;top:215px;width:1px;height:531px;background:#d4d4d4;"></div>
<div class="a" style="left:1101px;top:215px;width:1px;height:531px;background:#d4d4d4;"></div>
<div class="a" style="left:1165px;top:215px;width:1px;height:531px;background:#d4d4d4;"></div>
<div class="a" style="left:1229px;top:215px;width:1px;height:531px;background:#d4d4d4;"></div>
<div class="a" style="left:1293px;top:215px;width:1px;height:531px;background:#d4d4d4;"></div>
<div class="a" style="left:1357px;top:215px;width:1px;height:531px;background:#d4d4d4;"></div>
<div class="a" style="left:1421px;top:215px;width:1px;height:531px;background:#d4d4d4;"></div>
<div class="a" style="left:1485px;top:215px;width:1px;height:531px;background:#d4d4d4;"></div>
<div class="a" style="left:26px;top:434px;width:756px;height:21px;background:#bdd7ee;"></div>
<div class="t" style="left:28.40px;top:226px;font-size:13px;color:#000;transform:scaleX(1.1034);">Document title:</div>
<div class="t" style="left:191.40px;top:226px;font-size:13px;color:#000;transform:scaleX(1.0253);">Product Launch</div>
<div class="t" style="left:28.40px;top:246px;font-size:13px;color:#000;transform:scaleX(1.0556);">Project Manager:</div>
<div class="t" style="left:191.40px;top:246px;font-size:13px;color:#000;transform:scaleX(1.0775);">Richard Miller</div>
<div class="t" style="left:28.40px;top:266px;font-size:13px;color:#000;transform:scaleX(1.0556);">Project Manager:</div>
<div class="t" style="left:191.40px;top:266px;font-size:13px;color:#000;transform:scaleX(1.0775);">Richard Miller</div>
<div class="t" style="left:28.40px;top:286px;font-size:13px;color:#000;transform:scaleX(1.0556);">Project Manager:</div>
<div class="t" style="left:191.40px;top:286px;font-size:13px;color:#000;transform:scaleX(1.0147);">Brian Shark</div>
<div class="t" style="left:28.40px;top:306px;font-size:13px;color:#000;transform:scaleX(1.0556);">Project Manager:</div>
<div class="t" style="left:191.40px;top:306px;font-size:13px;color:#000;transform:scaleX(1.0133);">James Smith</div>
<div class="t" style="left:28.40px;top:326px;font-size:13px;color:#000;transform:scaleX(1.0556);">Project Manager:</div>
<div class="t" style="left:191.40px;top:326px;font-size:13px;color:#000;transform:scaleX(1.0133);">James Smith</div>
<div class="t" style="left:28.40px;top:346px;font-size:13px;color:#000;transform:scaleX(1.0556);">Project Manager:</div>
<div class="t" style="left:191.40px;top:346px;font-size:13px;color:#000;transform:scaleX(1.0133);">James Smith</div>
<div class="t" style="left:28.40px;top:366px;font-size:13px;color:#000;transform:scaleX(1.0556);">Project Manager:</div>
<div class="t" style="left:191.40px;top:366px;font-size:13px;color:#000;transform:scaleX(1.0147);">Brian Shark</div>
<div class="t" style="left:28.40px;top:386px;font-size:13px;color:#000;transform:scaleX(1.0556);">Project Manager:</div>
<div class="t" style="left:191.40px;top:386px;font-size:13px;color:#000;transform:scaleX(1.0543);">Dart Weider</div>
<div class="t" style="left:28.40px;top:406px;font-size:13px;color:#000;transform:scaleX(1.0556);">Project Manager:</div>
<div class="t" style="left:191.40px;top:406px;font-size:13px;color:#000;transform:scaleX(1.0543);">Dart Weider</div>
<div class="t" style="left:28.40px;top:446px;font-size:13px;color:#000;font-weight:bold;transform:scaleX(1.0072);">Project Name</div>
<div class="a" style="left:28.4px;top:452px;width:83.6px;height:1px;background:#000"></div>
<div class="a" style="left:28.4px;top:453px;width:83.6px;height:1px;background:#000;opacity:.3"></div>
<div class="t" style="left:191.40px;top:446px;font-size:13px;color:#000;font-weight:bold;transform:scaleX(0.9847);">Resource Name</div>
<div class="a" style="left:191.4px;top:452px;width:96.5px;height:1px;background:#000"></div>
<div class="a" style="left:191.4px;top:453px;width:96.5px;height:1px;background:#000;opacity:.3"></div>
<div class="t" style="left:440.40px;top:446px;font-size:13px;color:#000;font-weight:bold;transform:scaleX(0.9735);">Task Name</div>
<div class="a" style="left:440.4px;top:452px;width:66.2px;height:1px;background:#000"></div>
<div class="a" style="left:440.4px;top:453px;width:66.2px;height:1px;background:#000;opacity:.3"></div>
<div class="t" style="left:678.40px;top:446px;font-size:13px;color:#000;font-weight:bold;transform:scaleX(0.9608);">Resource Usage</div>
<div class="a" style="left:678.4px;top:452px;width:98.0px;height:1px;background:#000"></div>
<div class="a" style="left:678.4px;top:453px;width:98.0px;height:1px;background:#000;opacity:.3"></div>
<div class="t" style="left:28.40px;top:466px;font-size:13px;color:#000;transform:scaleX(1.0547);">Release to Production</div>
<div class="t" style="left:191.40px;top:466px;font-size:13px;color:#000;transform:scaleX(1.0595);">Karen Martin</div>
<div class="a" style="left:437px;top:450px;width:238px;height:24px;overflow:hidden">
<div class="t" style="left:3.50px;top:16px;font-size:13px;color:#000;transform:scaleX(1.0469);">7_1.1.Estimate market and make more competitive</div>
</div>
<div class="t" style="left:678.40px;top:466px;font-size:13px;color:#000;transform:scaleX(0.9800);">50.0</div>
<div class="t" style="left:28.40px;top:486px;font-size:13px;color:#000;transform:scaleX(1.0547);">Release to Production</div>
<div class="t" style="left:191.40px;top:486px;font-size:13px;color:#000;transform:scaleX(1.0595);">Karen Martin</div>
<div class="a" style="left:437px;top:470px;width:238px;height:24px;overflow:hidden">
<div class="t" style="left:3.50px;top:16px;font-size:13px;color:#000;transform:scaleX(1.0343);">7_1.2.Design and order final package</div>
</div>
<div class="t" style="left:678.40px;top:486px;font-size:13px;color:#000;transform:scaleX(0.9394);">100.0</div>
<div class="t" style="left:28.40px;top:506px;font-size:13px;color:#000;transform:scaleX(1.0547);">Release to Production</div>
<div class="t" style="left:191.40px;top:506px;font-size:13px;color:#000;transform:scaleX(1.0595);">Karen Martin</div>
<div class="a" style="left:437px;top:490px;width:238px;height:24px;overflow:hidden">
<div class="t" style="left:3.50px;top:16px;font-size:13px;color:#000;transform:scaleX(1.0207);">7_1.3.Create press releases</div>
</div>
<div class="t" style="left:678.40px;top:506px;font-size:13px;color:#000;transform:scaleX(0.9394);">100.0</div>
<div class="t" style="left:28.40px;top:526px;font-size:13px;color:#000;transform:scaleX(1.0547);">Release to Production</div>
<div class="t" style="left:191.40px;top:526px;font-size:13px;color:#000;transform:scaleX(1.0595);">Karen Martin</div>
<div class="a" style="left:437px;top:510px;width:238px;height:24px;overflow:hidden">
<div class="t" style="left:3.50px;top:16px;font-size:13px;color:#000;transform:scaleX(1.0545);">7_1.4.Create product specification materials</div>
</div>
<div class="t" style="left:678.40px;top:526px;font-size:13px;color:#000;transform:scaleX(0.9394);">100.0</div>
<div class="t" style="left:28.40px;top:546px;font-size:13px;color:#000;transform:scaleX(1.0547);">Release to Production</div>
<div class="t" style="left:191.40px;top:546px;font-size:13px;color:#000;transform:scaleX(1.0595);">Karen Martin</div>
<div class="a" style="left:437px;top:530px;width:238px;height:24px;overflow:hidden">
<div class="t" style="left:3.50px;top:16px;font-size:13px;color:#000;transform:scaleX(1.0573);">7_1.5.Create marketing presentations</div>
</div>
<div class="t" style="left:678.40px;top:546px;font-size:13px;color:#000;transform:scaleX(0.9800);">50.0</div>
<div class="t" style="left:28.40px;top:566px;font-size:13px;color:#000;transform:scaleX(1.0547);">Release to Production</div>
<div class="t" style="left:191.40px;top:566px;font-size:13px;color:#000;transform:scaleX(1.0595);">Karen Martin</div>
<div class="a" style="left:437px;top:550px;width:238px;height:24px;overflow:hidden">
<div class="t" style="left:3.50px;top:16px;font-size:13px;color:#000;transform:scaleX(1.0342);">7_1.7.Create sales, local, and product support</div>
</div>
<div class="t" style="left:678.40px;top:566px;font-size:13px;color:#000;transform:scaleX(0.9394);">100.0</div>
<div class="t" style="left:28.40px;top:586px;font-size:13px;color:#000;transform:scaleX(1.0547);">Release to Production</div>
<div class="t" style="left:191.40px;top:586px;font-size:13px;color:#000;transform:scaleX(1.0595);">Karen Martin</div>
<div class="a" style="left:437px;top:570px;width:238px;height:24px;overflow:hidden">
<div class="t" style="left:3.50px;top:16px;font-size:13px;color:#000;transform:scaleX(1.0432);">7_1.8.Update product forecasts based on data</div>
</div>
<div class="t" style="left:678.40px;top:586px;font-size:13px;color:#000;transform:scaleX(0.9394);">100.0</div>
<div class="t" style="left:28.40px;top:606px;font-size:13px;color:#000;transform:scaleX(1.0547);">Release to Production</div>
<div class="t" style="left:191.40px;top:606px;font-size:13px;color:#000;transform:scaleX(1.0595);">Karen Martin</div>
<div class="a" style="left:437px;top:590px;width:238px;height:24px;overflow:hidden">
<div class="t" style="left:3.50px;top:16px;font-size:13px;color:#000;transform:scaleX(1.0369);">7_1.9.Update launch plan based on forecasts</div>
</div>
<div class="t" style="left:678.40px;top:606px;font-size:13px;color:#000;transform:scaleX(0.9394);">100.0</div>
<div class="a" style="left:24px;top:213px;width:166px;height:23px;box-sizing:border-box;border:2px solid #217346"></div>
<div class="a" style="left:185px;top:231px;width:7px;height:7px;background:#fff;"></div>
<div class="a" style="left:186px;top:232px;width:5px;height:5px;background:#217346;"></div>
</div>
</body></html>
